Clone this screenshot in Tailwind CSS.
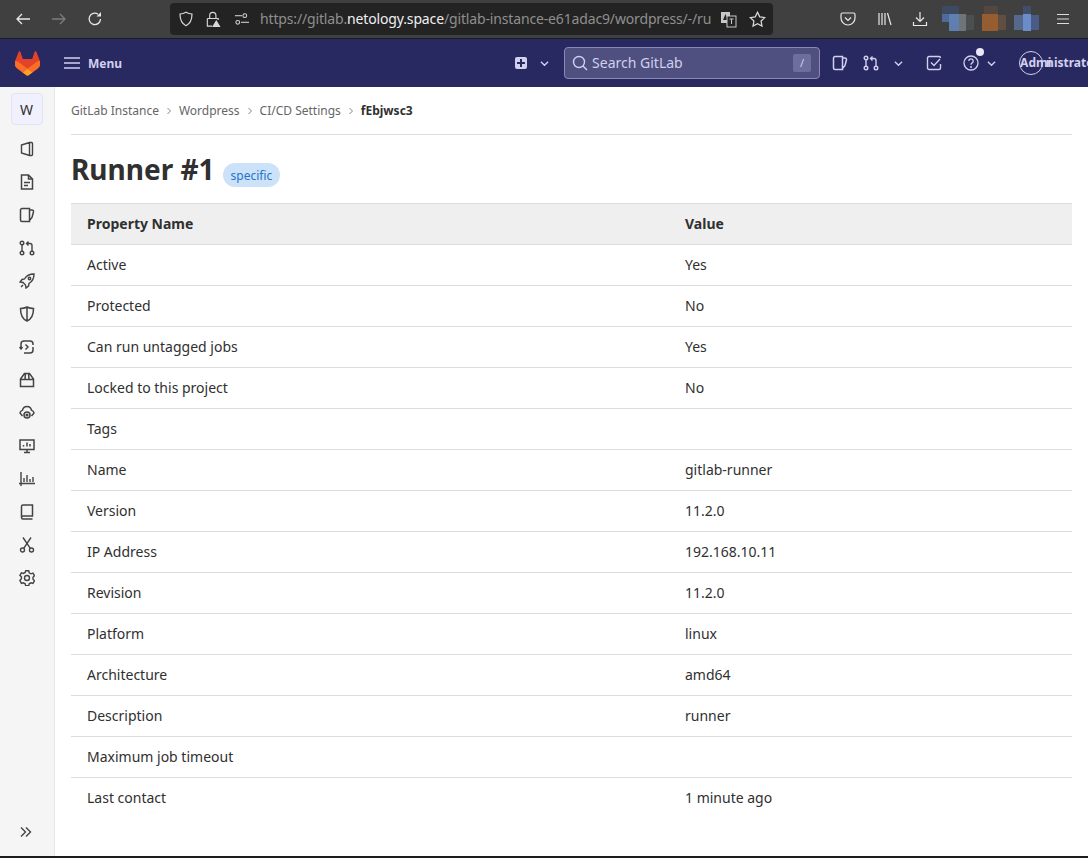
<!DOCTYPE html>
<html lang="en">
<head>
    <meta charset="UTF-8">
    <title>Runner #1</title>
    <script src="https://cdn.jsdelivr.net/npm/@tailwindcss/browser@4"></script>
</head>
<body class="h-[858px] w-[1088px] overflow-hidden bg-white font-['Noto_Sans',sans-serif] text-[14px] text-[#303030]">
    <div class="flex h-[858px] flex-col">
        <!-- browser toolbar -->
        <div class="flex h-[39px] shrink-0 items-center border-b border-[#1c1c1c] bg-[#404040] text-[#e8e8e8]">
            <div class="flex w-[170px] items-center pl-[15px]">
                <svg class="h-[16px] w-[16px]" viewBox="0 0 16 16" fill="none" stroke="currentColor" stroke-width="1.300"><path d="M15 8H2M7 3 2 8l5 5"/></svg>
                <svg class="ml-[20px] h-[16px] w-[16px] text-[#7c7c7c]" viewBox="0 0 16 16" fill="none" stroke="currentColor" stroke-width="1.300"><path d="M1 8h13M9 3l5 5-5 5"/></svg>
                <svg class="ml-[20px] h-[16px] w-[16px]" viewBox="0 0 16 16" fill="none" stroke="currentColor" stroke-width="1.300"><path d="M13.500 8A5.700 5.700 0 1 1 11 3.200"/><path d="M14 1v4.500H9.500" fill="currentColor" stroke="none"/></svg>
            </div>
            <div class="flex h-[32px] w-[603px] items-center rounded-[4px] bg-[#232323] text-[#d8d8d8]">
                <svg class="ml-[8px] h-[16px] w-[16px]" viewBox="0 0 16 16" fill="none" stroke="currentColor" stroke-width="1.200"><path d="M8 1.200c2 1.200 3.800 1.700 6 1.800 0 5.500-1.500 9.500-6 11.800C3.500 12.500 2 8.500 2 3c2.200-.1 4-.6 6-1.800z"/></svg>
                <svg class="ml-[11px] h-[17px] w-[16px]" viewBox="0 0 16 18"><path d="M4.500 8V4.800a3.300 3.300 0 0 1 6.600 0V8M2 8h11.500v1.500M2 8v8h5" fill="none" stroke="currentColor" stroke-width="1.200"/><path d="M11.500 9.500 16 17H7z" fill="currentColor"/></svg>
                <svg class="ml-[13px] h-[14px] w-[15px]" viewBox="0 0 16 14" fill="none" stroke="currentColor" stroke-width="1.100"><circle cx="11.500" cy="3.500" r="2"/><path d="M1 3.500h7.500"/><circle cx="4" cy="10.500" r="2"/><path d="M7.500 10.500H16"/></svg>
                <div class="ml-[11px] w-[451px] overflow-hidden whitespace-nowrap text-[14px] leading-[20px] tracking-[-0.15px] text-[#8f8f8f]">https://gitlab.<span class="text-[#f0f0f0]">netology.space</span>/gitlab-instance-e61adac9/wordpress/-/ru</div>
                <svg class="ml-[9px] h-[17px] w-[17px]" viewBox="0 0 17 17"><rect x="1" y="1" width="9" height="11" fill="#c8c8c8"/><path d="m5.500 3-2.500 6h5z" fill="#232323"/><rect x="7" y="5" width="9" height="11" fill="#232323" stroke="#c8c8c8"/><path d="M9.500 8h4M11.500 8v5" stroke="#c8c8c8" fill="none"/></svg>
                <svg class="ml-[12px] h-[17px] w-[17px]" viewBox="0 0 16 16" fill="none" stroke="currentColor" stroke-width="1.200"><path d="m8 1.200 2.100 4.300 4.700.7-3.400 3.300.8 4.700L8 12l-4.200 2.200.8-4.700L1.200 6.200l4.700-.7z"/></svg>
            </div>
            <div class="flex flex-1 items-center">
                <svg class="ml-[67px] h-[16px] w-[16px]" viewBox="0 0 16 16" fill="none" stroke="currentColor" stroke-width="1.200"><path d="M2.500 2h11A1.500 1.500 0 0 1 15 3.500V7a7 7 0 0 1-14 0V3.500A1.500 1.500 0 0 1 2.500 2z"/><path d="m5 6.500 3 3 3-3"/></svg>
                <svg class="ml-[21px] h-[16px] w-[16px]" viewBox="0 0 16 16" fill="none" stroke="currentColor" stroke-width="1.200"><path d="M2 2v12M5 2v12M8 2v12M10.500 2l3.500 12"/></svg>
                <svg class="ml-[19px] h-[16px] w-[16px]" viewBox="0 0 16 16" fill="none" stroke="currentColor" stroke-width="1.200"><path d="M8 1v9M4 6.500 8 10.500l4-4M1.500 11v3.500h13V11"/></svg>
                <!-- blurred add-on icons -->
                <div class="ml-[14px] flex h-[26px] w-[32px] items-start">
                    <div class="w-[7px]"><div class="h-[8px] bg-[#3e4a60]"></div><div class="h-[8px] bg-[#4d6a98]"></div></div>
                    <div class="w-[10px]"><div class="h-[8px] bg-[#3e4a60]"></div><div class="h-[17px] bg-[#5f7fb0]"></div></div>
                    <div class="mt-[8px] h-[17px] w-[7px] bg-[#6f7478]"></div>
                    <div class="mt-[9px] h-[15px] w-[8px] bg-[#4b4f50]"></div>
                </div>
                <div class="ml-[8px] flex h-[26px] w-[24px] items-start">
                    <div class="w-[16px]"><div class="ml-[2px] h-[8px] bg-[#54473f]"></div><div class="h-[17px] bg-[#965e30]"></div></div>
                    <div class="mt-[9px] h-[15px] w-[8px] bg-[#604e40]"></div>
                </div>
                <div class="ml-[8px] flex h-[26px] w-[25px] items-start">
                    <div class="mt-[9px] h-[15px] w-[9px] bg-[#56698c]"></div>
                    <div class="w-[8px]"><div class="h-[8px] bg-[#404e6a]"></div><div class="h-[17px] bg-[#6a8cc8]"></div></div>
                    <div class="mt-[9px] h-[15px] w-[8px] bg-[#4a5c85]"></div>
                </div>
                <svg class="ml-[18px] h-[12px] w-[12px] text-[#dcdcdc]" viewBox="0 0 12 12" stroke="currentColor" stroke-width="1.100"><path d="M0 1.500h12M0 6h12M0 10.500h12"/></svg>
            </div>
        </div>

        <!-- gitlab navbar -->
        <div class="flex h-[48px] shrink-0 items-center bg-[#292961] text-[#d1d0ee]">
            <svg class="ml-[15px] h-[25px] w-[25px]" viewBox="96 97 188 186">
                <path d="M282.830 170.730l-.27-.69-26.140-68.220a6.810 6.810 0 0 0-2.690-3.240 7 7 0 0 0-8 .43 7 7 0 0 0-2.320 3.520l-17.650 54H154.290l-17.650-54A6.860 6.860 0 0 0 134.320 99a7 7 0 0 0-8-.43 6.870 6.870 0 0 0-2.690 3.240L97.440 170l-.26.69a48.540 48.540 0 0 0 16.100 56.100l.09.07.24.17 39.820 29.820 19.700 14.910 12 9.060a8.070 8.070 0 0 0 9.760 0l12-9.060 19.700-14.910 40.060-30 .1-.08A48.560 48.560 0 0 0 282.830 170.730Z" fill="#e24329"/>
                <path d="M282.830 170.730l-.27-.69a88.300 88.300 0 0 0-35.150 15.800L190 229.250c19.550 14.790 36.570 27.640 36.570 27.640l40.060-30 .1-.08A48.560 48.560 0 0 0 282.830 170.730Z" fill="#fc6d26"/>
                <path d="M153.430 256.890l19.700 14.910 12 9.060a8.070 8.070 0 0 0 9.760 0l12-9.060 19.700-14.910S209.550 244 190 229.250C170.450 244 153.430 256.890 153.430 256.890Z" fill="#fca326"/>
                <path d="M132.580 185.840A88.190 88.190 0 0 0 97.440 170l-.26.69a48.540 48.540 0 0 0 16.100 56.100l.09.07.24.17 39.820 29.820s17-12.850 36.570-27.640Z" fill="#fc6d26"/>
            </svg>
            <svg class="ml-[24px] h-[16px] w-[16px]" viewBox="0 0 16 16" stroke="currentColor" stroke-width="1.500"><path d="M0 3h16M0 8h16M0 13h16"/></svg>
            <span class="ml-[8px] mt-[1px] text-[12px] font-bold leading-[18px]">Menu</span>
            <div class="ml-[393px] flex h-[12px] w-[12px] items-center justify-center rounded-[2px] bg-[#d1d0ee]"><svg class="h-[8px] w-[8px]" viewBox="0 0 8 8" stroke="#292961" stroke-width="2"><path d="M4 0v8M0 4h8"/></svg></div>
            <svg class="ml-[13px] h-[9px] w-[9px]" viewBox="0 0 10 10" fill="none" stroke="currentColor" stroke-width="1.500"><path d="m1 3 4 4 4-4"/></svg>
            <div class="ml-[15px] flex h-[32px] w-[256px] items-center rounded-[4px] border border-[#8a89b5] bg-[#4f4f80] text-[#d1d0ee]">
                <svg class="ml-[7px] h-[16px] w-[16px]" viewBox="0 0 16 16" fill="none" stroke="currentColor" stroke-width="1.400"><circle cx="7" cy="7" r="5.500"/><path d="m11 11 4 4"/></svg>
                <span class="ml-[4px] text-[14px] leading-[20px]">Search GitLab</span>
                <div class="ml-auto mr-[8px] flex h-[18px] w-[18px] items-center justify-center rounded-[2px] bg-[#6e6e9c] text-[11px]">/</div>
            </div>
            <svg class="ml-[12px] h-[16px] w-[16px]" viewBox="0 0 16 16" fill="none" stroke="currentColor" stroke-width="1.500"><path d="M3 1.500h7.500v13H3a1.500 1.500 0 0 1-1.500-1.500V3A1.500 1.500 0 0 1 3 1.500zM10.500 3h2.500a1.500 1.500 0 0 1 1.500 1.800L13 10.500l-2.500 3"/></svg>
            <svg class="ml-[15px] h-[16px] w-[16px]" viewBox="0 0 16 16" fill="none" stroke="currentColor" stroke-width="1.400"><circle cx="3" cy="3" r="1.800"/><circle cx="3" cy="13" r="1.800"/><circle cx="13" cy="13" r="1.800"/><path d="M3 5v6M13 11V5.500A2 2 0 0 0 11 3.500H8M9.500 1.500l-2 2 2 2"/></svg>
            <svg class="ml-[15px] h-[9px] w-[9px]" viewBox="0 0 10 10" fill="none" stroke="currentColor" stroke-width="1.500"><path d="m1 3 4 4 4-4"/></svg>
            <svg class="ml-[23px] h-[16px] w-[16px]" viewBox="0 0 16 16" fill="none" stroke="currentColor" stroke-width="1.400"><path d="M14.500 9v4A1.500 1.500 0 0 1 13 14.500H3A1.500 1.500 0 0 1 1.500 13V3A1.500 1.500 0 0 1 3 1.500h10A1.500 1.500 0 0 1 14.500 3"/><path d="m5 7.500 3 3 6-6.500"/></svg>
            <div class="relative ml-[21px] h-[16px] w-[16px]">
                <svg class="h-[16px] w-[16px]" viewBox="0 0 16 16" fill="none" stroke="currentColor" stroke-width="1.300"><circle cx="8" cy="8" r="7"/><path d="M5.800 6a2.200 2.200 0 1 1 3.400 1.900c-.8.500-1.200 1-1.200 1.900"/><circle cx="8" cy="12" r=".4"/></svg>
                <div class="absolute -right-[5px] -top-[7px] h-[8px] w-[8px] rounded-full bg-[#e8e8f8]"></div>
            </div>
            <svg class="ml-[8px] h-[9px] w-[9px]" viewBox="0 0 10 10" fill="none" stroke="currentColor" stroke-width="1.500"><path d="m1 3 4 4 4-4"/></svg>
            <div class="relative ml-[23px] h-[24px] w-[24px] shrink-0 rounded-full border border-[#d1d0ee]">
                <span class="absolute left-0 top-[1px] whitespace-nowrap text-[12px] font-bold leading-[20px]">Admi</span>
                <span class="absolute left-[26px] top-[1px] whitespace-nowrap text-[12px] font-bold leading-[20px]">nistrator</span>
            </div>
        </div>

        <div class="flex min-h-0 flex-1">
            <!-- sidebar -->
            <div class="flex w-[55px] shrink-0 flex-col items-center border-r border-[#e8e8e8] bg-[#f5f5f5] pt-[6px] text-[#444]">
                <div class="mr-[1px] flex h-[32px] w-[32px] items-center justify-center rounded-[4px] border border-[#e3e3f5] bg-[#f0f0ff] text-[14px] text-[#303030]">W</div>
                <div class="mr-[1px] mt-[16px] flex flex-col gap-[17px]">
                    <svg class="h-[16px] w-[16px]" viewBox="0 0 16 16" fill="none" stroke="currentColor" stroke-width="1.400"><path d="M2.500 4 10.500 1.500h2a1 1 0 0 1 1 1v11a1 1 0 0 1-1 1h-2l-8-2.500zM10.500 1.500v13"/></svg>
                    <svg class="h-[16px] w-[16px]" viewBox="0 0 16 16" fill="none" stroke="currentColor" stroke-width="1.500"><path d="M2.500 1h7l4 4v10h-11zM9.500 1v4h4M5 8.500h6M5 11.500h4"/></svg>
                    <svg class="h-[16px] w-[16px]" viewBox="0 0 16 16" fill="none" stroke="currentColor" stroke-width="1.500"><path d="M3 1.500h7.500v13H3a1.500 1.500 0 0 1-1.500-1.500V3A1.500 1.500 0 0 1 3 1.500zM10.500 3h2.500a1.500 1.500 0 0 1 1.500 1.800L13 10.500l-2.500 3"/></svg>
                    <svg class="h-[16px] w-[16px]" viewBox="0 0 16 16" fill="none" stroke="currentColor" stroke-width="1.400"><circle cx="3" cy="3" r="1.800"/><circle cx="3" cy="13" r="1.800"/><circle cx="13" cy="13" r="1.800"/><path d="M3 5v6M13 11V5.500A2 2 0 0 0 11 3.500H8M9.500 1.500l-2 2 2 2"/></svg>
                    <svg class="h-[16px] w-[16px]" viewBox="0 0 16 16" fill="none" stroke="currentColor" stroke-width="1.400"><path d="M15 1c-4.500 0-7.500 1.500-9.500 5L3 6.500 1 9l3 .5 2.500 2.500.5 3 2.500-2 .5-2.500C13.500 8.500 15 5.500 15 1z"/><circle cx="10.500" cy="5.500" r="1.200"/><path d="M2 14l2-2"/></svg>
                    <svg class="h-[16px] w-[16px]" viewBox="0 0 16 16" fill="none" stroke="currentColor" stroke-width="1.500"><path d="M8 1c2 1 4 1.500 6.500 1.500C14.500 9 13 13 8 15 3 13 1.500 9 1.500 2.500 4 2.500 6 2 8 1zM8 1v14"/></svg>
                    <svg class="h-[16px] w-[16px]" viewBox="0 0 16 16" fill="none" stroke="currentColor" stroke-width="1.500"><path d="M2 9.500V5a3 3 0 0 1 3-3h6a3 3 0 0 1 3 3v1M14 8v3a3 3 0 0 1-3 3H5M.5 8 2 10l1.500-2M6.500 5.500 9 8l-2.500 2.500"/></svg>
                    <svg class="h-[16px] w-[16px]" viewBox="0 0 16 16" fill="none" stroke="currentColor" stroke-width="1.500"><path d="M1.500 7 5.500 1.500h5L14.500 7v7.500h-13zM1.500 7.500h13M6.500 1.500 6 7M9.500 1.500 10 7"/></svg>
                    <svg class="h-[16px] w-[16px]" viewBox="0 0 16 16" fill="none" stroke="currentColor" stroke-width="1.500"><path d="M3.500 11 1 8c0-1 .7-1.800 2.500-2.800C4 3 6 1.500 8 1.500s4 1.500 4.500 3.700C14.300 6.200 15 7 15 8l-2.500 3"/><circle cx="8" cy="10" r="3"/><circle cx="8" cy="10" r=".8"/></svg>
                    <svg class="h-[16px] w-[16px]" viewBox="0 0 16 16" fill="none" stroke="currentColor" stroke-width="1.500"><path d="M1 2h14v9.500H1zM5 14.500h6M8 11.500v3M4.500 8.500V7M8 8.500V4.500M11 8.500V6"/></svg>
                    <svg class="h-[16px] w-[16px]" viewBox="0 0 16 16" fill="none" stroke="currentColor" stroke-width="1.400"><path d="M2 1v14M0 12.500h16M5 11V7M8 11V4M11 11V8M14 11V6"/></svg>
                    <svg class="h-[16px] w-[16px]" viewBox="0 0 16 16" fill="none" stroke="currentColor" stroke-width="1.500"><path d="M4 1h9.500v11H4a1.500 1.500 0 0 0 0 3h9.500M2.500 13.500V2.500A1.500 1.500 0 0 1 4 1"/></svg>
                    <svg class="h-[16px] w-[16px]" viewBox="0 0 16 16" fill="none" stroke="currentColor" stroke-width="1.400"><circle cx="3.500" cy="13" r="2"/><circle cx="12.500" cy="13" r="2"/><path d="M4.700 11.400 12 .5M11.300 11.400 4 .5"/></svg>
                    <svg class="h-[16px] w-[16px]" viewBox="0 0 16 16" fill="none" stroke="currentColor" stroke-width="1.400"><path d="M6.500 1h3l.5 2 1.800 1 2-.6 1.500 2.600-1.500 1.500v2l1.500 1.500-1.500 2.600-2-.6-1.800 1-.5 2h-3l-.5-2-1.800-1-2 .6L.7 10.500 2.200 9V7L.7 5.500 2.200 3l2 .6 1.800-1z" transform="translate(.2 -.2)"/><circle cx="8" cy="8" r="2.500"/></svg>
                </div>
                <svg class="mb-[18px] mr-[2px] mt-auto h-[12px] w-[12px]" viewBox="0 0 12 12" fill="none" stroke="currentColor" stroke-width="1.400"><path d="m1 1.500 4.500 4.500L1 10.500M6 1.500l4.500 4.500L6 10.500"/></svg>
            </div>

            <!-- content -->
            <div class="min-w-0 flex-1 px-[16px]">
                <nav class="flex h-[48px] items-center border-b border-[#dcdcdc] text-[12px] text-[#666]">
                    <span>GitLab Instance</span>
                    <svg class="mx-[7px] h-[8px] w-[6px]" viewBox="0 0 6 8" fill="none" stroke="#868686" stroke-width="1"><path d="m1.500 1 3 3-3 3"/></svg>
                    <span>Wordpress</span>
                    <svg class="mx-[7px] h-[8px] w-[6px]" viewBox="0 0 6 8" fill="none" stroke="#868686" stroke-width="1"><path d="m1.500 1 3 3-3 3"/></svg>
                    <span>CI/CD Settings</span>
                    <svg class="mx-[7px] h-[8px] w-[6px]" viewBox="0 0 6 8" fill="none" stroke="#868686" stroke-width="1"><path d="m1.500 1 3 3-3 3"/></svg>
                    <span class="font-bold text-[#303030]">fEbjwsc3</span>
                </nav>
                <div class="flex h-[68px] items-center">
                    <h1 class="text-[28px] font-bold leading-[36px] text-[#303030]">Runner #1</h1>
                    <span class="ml-[8px] mt-[12px] rounded-full bg-[#cbe2f9] px-[8px] pt-[1px] text-[12px] leading-[23px] text-[#1f75cb]">specific</span>
                </div>
                <table class="w-[1001px] table-fixed border-collapse">
                    <thead>
                        <tr class="h-[41px] border-y border-[#dcdcdc] bg-[#efefef]">
                            <th class="w-[598px] pb-[2px] pl-[16px] text-left font-bold">Property Name</th>
                            <th class="pb-[2px] pl-[16px] text-left font-bold">Value</th>
                        </tr>
                    </thead>
                    <tbody class="[&_td]:pb-[2px] [&_td]:pl-[16px]">
                        <tr class="h-[41px] border-b border-[#dcdcdc]"><td>Active</td><td>Yes</td></tr>
                        <tr class="h-[41px] border-b border-[#dcdcdc]"><td>Protected</td><td>No</td></tr>
                        <tr class="h-[41px] border-b border-[#dcdcdc]"><td>Can run untagged jobs</td><td>Yes</td></tr>
                        <tr class="h-[41px] border-b border-[#dcdcdc]"><td>Locked to this project</td><td>No</td></tr>
                        <tr class="h-[41px] border-b border-[#dcdcdc]"><td>Tags</td><td></td></tr>
                        <tr class="h-[41px] border-b border-[#dcdcdc]"><td>Name</td><td>gitlab-runner</td></tr>
                        <tr class="h-[41px] border-b border-[#dcdcdc]"><td>Version</td><td>11.2.0</td></tr>
                        <tr class="h-[41px] border-b border-[#dcdcdc]"><td>IP Address</td><td>192.168.10.11</td></tr>
                        <tr class="h-[41px] border-b border-[#dcdcdc]"><td>Revision</td><td>11.2.0</td></tr>
                        <tr class="h-[41px] border-b border-[#dcdcdc]"><td>Platform</td><td>linux</td></tr>
                        <tr class="h-[41px] border-b border-[#dcdcdc]"><td>Architecture</td><td>amd64</td></tr>
                        <tr class="h-[41px] border-b border-[#dcdcdc]"><td>Description</td><td>runner</td></tr>
                        <tr class="h-[41px] border-b border-[#dcdcdc]"><td>Maximum job timeout</td><td></td></tr>
                        <tr class="h-[41px]"><td>Last contact</td><td>1 minute ago</td></tr>
                    </tbody>
                </table>
            </div>
        </div>
        <div class="h-[2px] shrink-0 bg-[#1c1c1c]"></div>
    </div>
</body>
</html>
